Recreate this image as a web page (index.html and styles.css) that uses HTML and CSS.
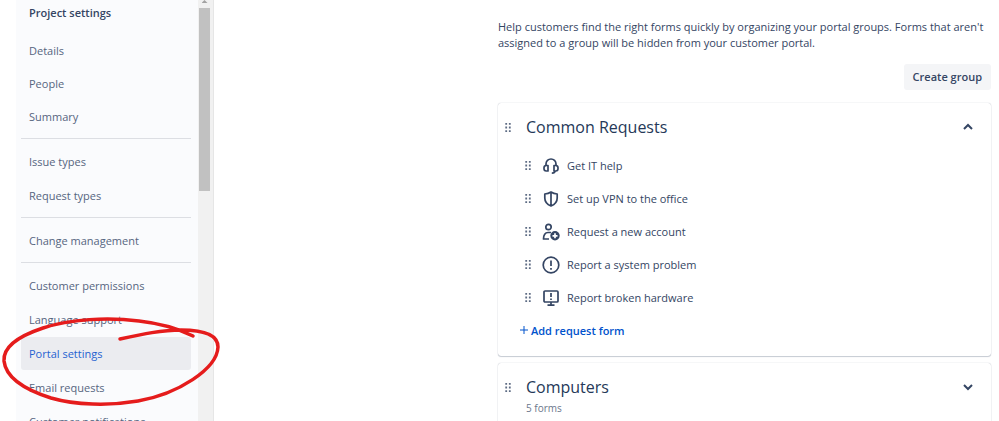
FILE: index.html
```
<!DOCTYPE html>
<html lang="en">
<head>
    <meta charset="UTF-8">
    <meta name="viewport" content="width=device-width, initial-scale=1.0">
    <title>Portal settings</title>
    <link rel="stylesheet" href="styles.css">
</head>
<body>
    <!-- Shared icons -->
    <svg class="sprite" aria-hidden="true">
        <symbol id="grip" viewBox="0 0 6 10">
            <path d="M0 0h2v2H0zM4 0h2v2H4zM0 4h2v2H0zM4 4h2v2H4zM0 8h2v2H0zM4 8h2v2H4z" fill="currentColor"/>
        </symbol>
    </svg>

    <aside class="sidebar">
        <nav class="side-nav">
            <h2 class="side-title">Project settings</h2>
            <div class="nav-group first">
                <a href="#">Details</a>
                <a href="#">People</a>
                <a href="#">Summary</a>
            </div>
            <div class="nav-group">
                <a href="#">Issue types</a>
                <a href="#">Request types</a>
            </div>
            <div class="nav-group">
                <a href="#">Change management</a>
            </div>
            <div class="nav-group">
                <a href="#">Customer permissions</a>
                <a href="#">Language support</a>
                <a href="#" class="active">Portal settings</a>
                <a href="#">Email requests</a>
                <a href="#">Customer notifications</a>
            </div>
        </nav>
        <div class="scrollbar">
            <div class="scroll-arrow"></div>
            <div class="scroll-thumb"></div>
        </div>
        <!-- Hand drawn ring around the active item -->
        <svg class="ring" width="224" height="100" viewBox="0 312 224 100" aria-hidden="true">
            <path d="M193 336 C177 328 157 323 139 321 C108 317 70 319 43 328 C16 337 3 348 4 361 C6 379 29 391 51 398 C75 405 109 406 138 401 C178 394 217 369 218 347 C218 334 202 330 181 330 C162 330 143 334 120 339"/>
        </svg>
    </aside>

    <main class="main">
        <p>Help customers find the right forms quickly by organizing your portal groups. Forms that aren't assigned to a group will be hidden from your customer portal.</p>
        <div class="actions">
            <button type="button" class="create">Create group</button>
        </div>

        <section class="card">
            <header class="card-head">
                <svg class="grip"><use href="#grip"/></svg>
                <h3>Common Requests</h3>
                <button type="button" class="toggle" aria-label="Collapse">
                    <svg width="12" height="8" viewBox="0 0 12 8"><path d="M2 6l4-4 4 4"/></svg>
                </button>
            </header>
            <ul class="forms">
                <li>
                    <svg class="grip"><use href="#grip"/></svg>
                    <svg class="icon" viewBox="0 0 18 18">
                        <path d="M4 9V7a5 5 0 0 1 10 0v2"/>
                        <path d="M6 8.500v5.500H4.200A2.200 2.200 0 0 1 2 11.800v-1A2.300 2.300 0 0 1 4.200 8.500zM12 8.500V14h1.800a2.200 2.200 0 0 0 2.200-2.200v-1a2.300 2.300 0 0 0-2.200-2.300z"/>
                        <path d="M13 14c0 1.500-1 2.200-3.200 2.200"/>
                    </svg>
                    <span>Get IT help</span>
                </li>
                <li>
                    <svg class="grip"><use href="#grip"/></svg>
                    <svg class="icon" viewBox="0 0 18 18">
                        <path d="M9 2C7.200 3.300 5 3.900 2.800 4v4c0 3.800 2.400 6.500 6.200 8 3.800-1.500 6.200-4.200 6.200-8V4C13 3.900 10.800 3.300 9 2zM9 2v14"/>
                    </svg>
                    <span>Set up VPN to the office</span>
                </li>
                <li>
                    <svg class="grip"><use href="#grip"/></svg>
                    <svg class="icon" viewBox="0 0 18 18">
                        <circle cx="6.500" cy="4" r="2.700"/>
                        <path d="M9 9.500H6C3.200 9.500 1.500 12 1.500 16H7"/>
                        <circle class="solid" cx="13" cy="12.800" r="4.700"/>
                        <path class="plus" d="M13 10.300v5M10.500 12.800h5"/>
                    </svg>
                    <span>Request a new account</span>
                </li>
                <li>
                    <svg class="grip"><use href="#grip"/></svg>
                    <svg class="icon" viewBox="0 0 18 18">
                        <circle cx="9" cy="9" r="7.800"/>
                        <path d="M9 4.500v5.500M9 12v1.800"/>
                    </svg>
                    <span>Report a system problem</span>
                </li>
                <li>
                    <svg class="grip"><use href="#grip"/></svg>
                    <svg class="icon" viewBox="0 0 18 18">
                        <rect x="2" y="2" width="14" height="11" rx="1"/>
                        <path d="M9 4v4M9 9.500v1.500M5.500 16.200h7M9 13v3"/>
                    </svg>
                    <span>Report broken hardware</span>
                </li>
            </ul>
            <button type="button" class="add">
                <svg width="8" height="8" viewBox="0 0 8 8"><path d="M4 0v8M0 4h8"/></svg>
                Add request form
            </button>
        </section>

        <section class="card">
            <header class="card-head">
                <svg class="grip"><use href="#grip"/></svg>
                <h3>Computers</h3>
                <button type="button" class="toggle" aria-label="Expand">
                    <svg width="12" height="8" viewBox="0 0 12 8"><path d="M2 2l4 4 4-4"/></svg>
                </button>
            </header>
            <p class="count">5 forms</p>
        </section>
    </main>
</body>
</html>
```
FILE: styles.css
```
* {
    box-sizing: border-box;
}

body {
    margin: 0;
    height: 100vh;
    display: flex;
    overflow: hidden;
    background: #fff;
    color: #344563;
    font-family: "Open Sans", "Noto Sans", sans-serif;
    font-size: 11px;
    line-height: 16px;
}

h2, h3, p, ul {
    margin: 0;
    padding: 0;
}

button {
    border: none;
    background: none;
    padding: 0;
    font: inherit;
    color: inherit;
    cursor: pointer;
}

.sprite {
    position: absolute;
    width: 0;
    height: 0;
}

/* Sidebar */
.sidebar {
    position: relative;
    display: flex;
    flex: none;
    height: 100vh;
    margin-left: 16px;
}

.side-nav {
    width: 182px;
    padding: 5px 7px 0 5px;
    overflow: hidden;
    background: #fafbfd;
}

.side-title {
    padding: 0 8px;
    margin-bottom: 13px;
    font-size: 11px;
    font-weight: 600;
    line-height: 16px;
    color: #344563;
}

.nav-group {
    display: flex;
    flex-direction: column;
    gap: 1px;
    margin-top: 5px;
    padding-top: 6px;
    border-top: 1px solid #dcdee3;
}

.nav-group.first {
    gap: 0;
    margin-top: 0;
    padding-top: 0;
    border-top: none;
}

.nav-group a {
    padding: 0 8px;
    border-radius: 3px;
    line-height: 33px;
    white-space: nowrap;
    color: #56657f;
    text-decoration: none;
}

.nav-group a.active {
    background: #ebecf0;
    color: #1f62d0;
}

.scrollbar {
    width: 16px;
    padding: 0 3px 0 1px;
    background: #f1f1f1;
    border-right: 1px solid #e6e6e6;
}

.scroll-arrow {
    width: 6px;
    height: 3px;
    margin: 0 auto 5px;
    background: #a3a3a3;
    clip-path: polygon(50% 0, 100% 100%, 0 100%);
}

.scroll-thumb {
    height: 183px;
    background: #c1c1c1;
}

.ring {
    position: absolute;
    top: 312px;
    left: -16px;
    fill: none;
    stroke: #e51c1c;
    stroke-width: 3.5px;
    stroke-linecap: round;
    pointer-events: none;
}

/* Portal groups */
.main {
    flex: 1;
    min-width: 0;
    margin-left: 284px;
    padding: 19px 8px 0 0;
}

.actions {
    display: flex;
    justify-content: flex-end;
    margin: 13px 0;
}

.create {
    height: 26px;
    padding: 0 9px;
    border-radius: 3px;
    background: #f4f5f7;
    font-weight: 600;
}

.card {
    margin-bottom: 7px;
    padding: 12px 16px 17px 7px;
    border-radius: 3px;
    box-shadow: 0 0 1px rgba(9, 30, 66, 0.35), 0 1px 1px rgba(9, 30, 66, 0.2);
}

.card-head {
    display: flex;
    align-items: center;
    height: 24px;
    margin-bottom: 10px;
}

.card-head h3 {
    flex: 1;
    margin-left: 15px;
    font-size: 16px;
    font-weight: 400;
    line-height: 24px;
    color: #253858;
}

.grip {
    flex: none;
    width: 6px;
    height: 9px;
    color: #5e6c84;
}

.toggle {
    display: flex;
    padding: 4px 1px;
}

.toggle path {
    fill: none;
    stroke: #344563;
    stroke-width: 2px;
}

.forms {
    padding-left: 20px;
    list-style: none;
}

.forms li {
    display: flex;
    align-items: center;
    height: 33px;
}

.icon {
    width: 18px;
    height: 18px;
    margin: 0 7px 0 11px;
    fill: none;
    stroke: #344563;
    stroke-width: 1.7px;
    stroke-linejoin: round;
}

.icon .solid {
    fill: #344563;
    stroke: none;
}

.icon .plus {
    stroke: #fff;
}

.add {
    display: flex;
    gap: 3px;
    margin: 9px 0 0 15px;
    font-weight: 600;
    color: #0052cc;
}

.add svg {
    margin-top: 3px;
    stroke: currentColor;
}

.count {
    margin: -9px 0 0 21px;
    font-size: 10px;
    color: #6b778c;
}
```
